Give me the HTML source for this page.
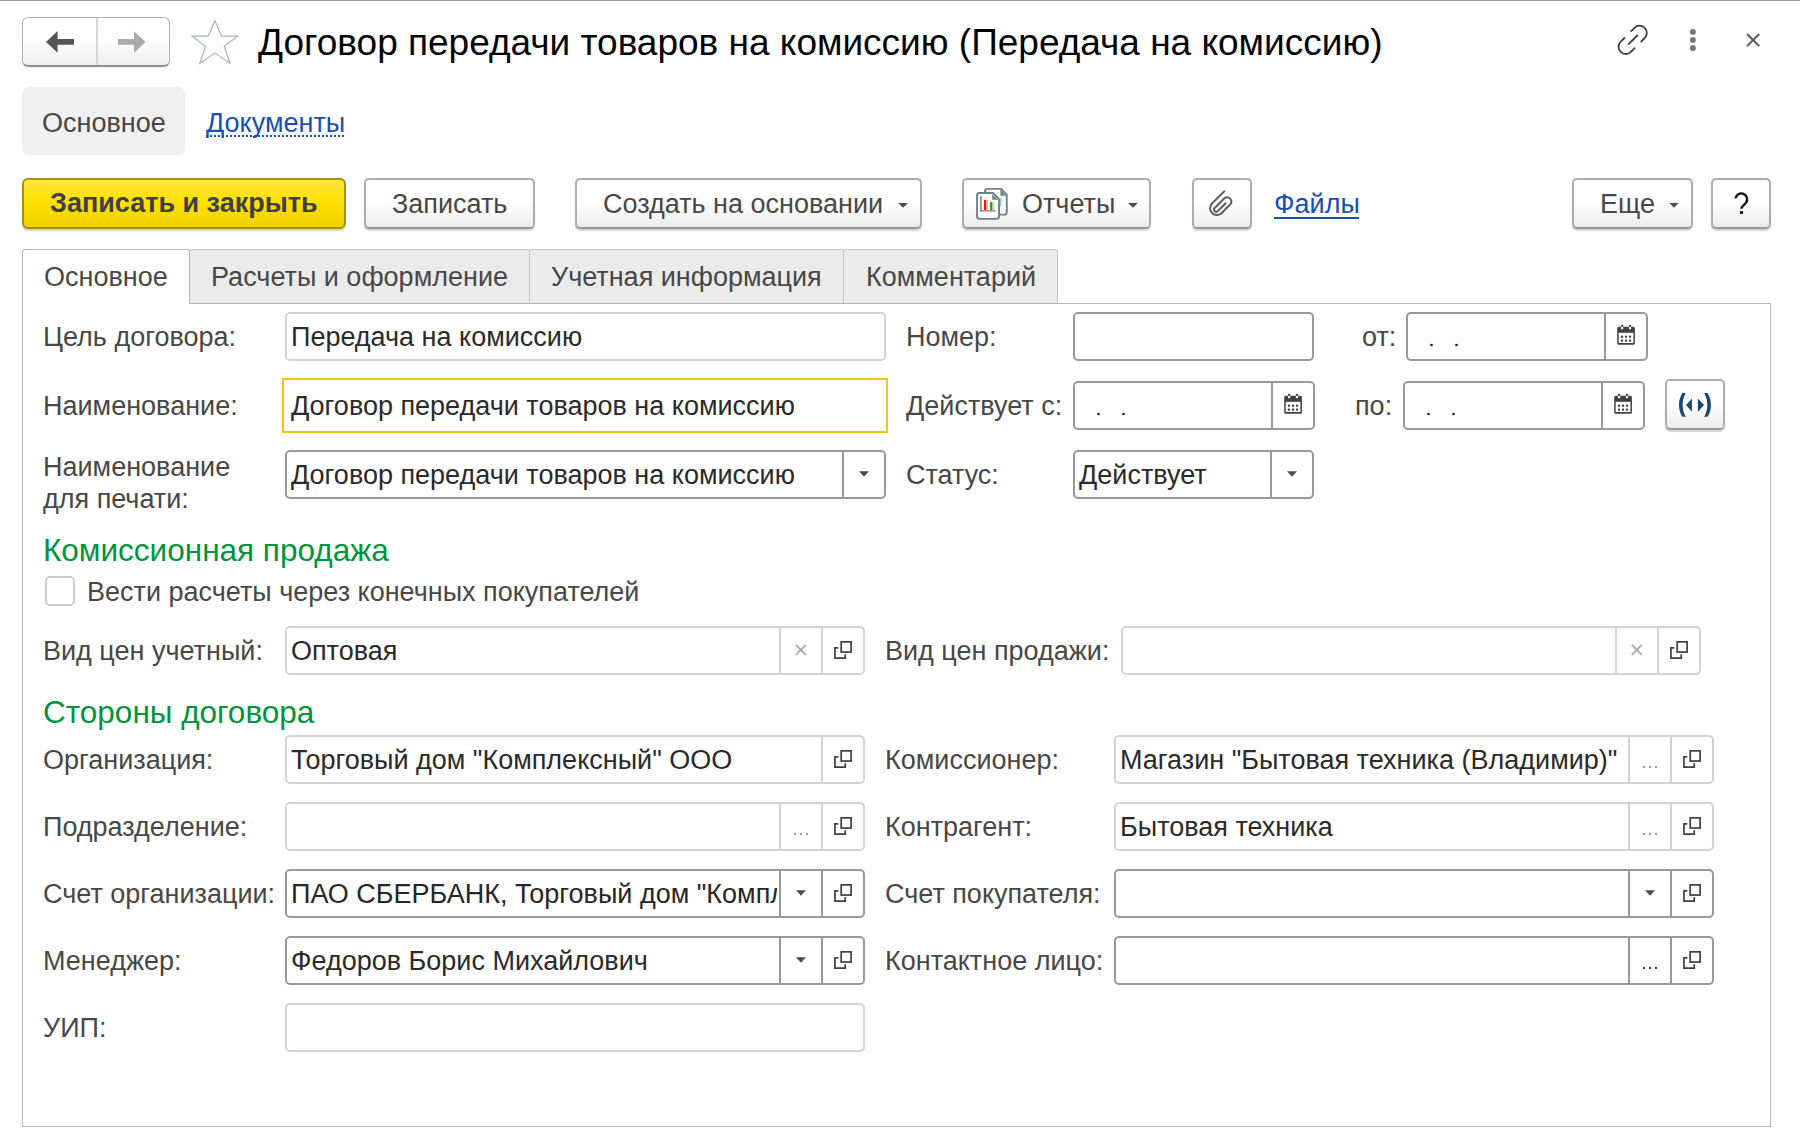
<!DOCTYPE html><html><head><meta charset="utf-8"><style>
html,body{margin:0;padding:0}
body{width:1800px;height:1146px;overflow:hidden;background:#fff;position:relative;font-family:"Liberation Sans",sans-serif}
.a{position:absolute;box-sizing:border-box}
.t{white-space:nowrap;line-height:40px;font-family:"Liberation Sans",sans-serif}
.inp{border:2px solid #999;border-radius:5px;background:#fff}
.btn{border:2px solid #adadad;border-bottom-color:#989898;border-radius:5px;background:linear-gradient(#fff 0%,#fff 45%,#ededed 100%);box-shadow:0 1.5px 1px #d6d6d6}
</style></head><body>
<div class="a" style="left:0px;top:0px;width:1800px;height:1px;background:#a0a0a0"></div>
<div class="a" style="left:22px;top:17px;width:148px;height:50px;border:1px solid #b0b0b0;border-bottom:2px solid #929292;border-radius:6px;background:linear-gradient(#fff 0%,#fff 40%,#efefef 100%);box-shadow:0 1px 1px rgba(0,0,0,0.06)"></div>
<div class="a" style="left:96px;top:18px;width:2px;height:47px;background:#d8d8d8"></div>
<div class="a t" style="left:258px;top:23px;font-size:37px;color:#000;font-weight:normal;">Договор передачи товаров на комиссию (Передача на комиссию)</div>
<div class="a" style="left:22px;top:87px;width:163px;height:68px;background:#f0f0f0;border-radius:7px"></div>
<div class="a t" style="left:42px;top:103px;font-size:27px;color:#474747;font-weight:normal;">Основное</div>
<div class="a t" style="left:206px;top:103px;font-size:27px;color:#1550b5;font-weight:normal;">Документы</div>
<div class="a" style="left:206px;top:135px;width:140px;height:2px;background-image:linear-gradient(90deg,#1550b5 50%,transparent 50%);background-size:4px 2px"></div>
<div class="a" style="left:22px;top:178px;width:324px;height:51px;border:2px solid #a5910a;border-radius:6px;background:linear-gradient(#ffe640,#fee100 45%,#f0d200);box-shadow:0 1.5px 1px #cfd2d6"></div>
<div class="a t" style="left:50px;top:183px;font-size:27px;color:#3f3f46;font-weight:bold;">Записать и закрыть</div>
<div class="a btn" style="left:364px;top:178px;width:171px;height:51px"></div>
<div class="a t" style="left:392px;top:184px;font-size:27px;color:#474747;font-weight:normal;">Записать</div>
<div class="a btn" style="left:575px;top:178px;width:347px;height:51px"></div>
<div class="a t" style="left:603px;top:184px;font-size:27px;color:#474747;font-weight:normal;">Создать на основании</div>
<div class="a btn" style="left:962px;top:178px;width:189px;height:51px"></div>
<div class="a t" style="left:1022px;top:184px;font-size:27px;color:#474747;font-weight:normal;">Отчеты</div>
<div class="a btn" style="left:1192px;top:178px;width:60px;height:51px"></div>
<div class="a t" style="left:1274px;top:184px;font-size:27px;color:#1550b5;font-weight:normal;">Файлы</div>
<div class="a" style="left:1274px;top:217px;width:85px;height:2px;background:#1550b5"></div>
<div class="a btn" style="left:1572px;top:178px;width:121px;height:51px"></div>
<div class="a t" style="left:1600px;top:184px;font-size:27px;color:#474747;font-weight:normal;">Еще</div>
<div class="a btn" style="left:1711px;top:178px;width:60px;height:51px"></div>
<div class="a" style="left:189px;top:249px;width:341px;height:55px;background:#ebebeb;border:1px solid #c4c4c4;border-bottom:none;border-radius:3px 3px 0 0"></div>
<div class="a" style="left:529px;top:249px;width:315px;height:55px;background:#ebebeb;border:1px solid #c4c4c4;border-bottom:none;border-radius:3px 3px 0 0"></div>
<div class="a" style="left:843px;top:249px;width:215px;height:55px;background:#ebebeb;border:1px solid #c4c4c4;border-bottom:none;border-radius:3px 3px 0 0"></div>
<div class="a" style="left:22px;top:303px;width:1749px;height:824px;border:1px solid #b5b5b5"></div>
<div class="a" style="left:22px;top:249px;width:168px;height:55px;background:#fff;border:1px solid #b5b5b5;border-bottom:none;border-radius:3px 3px 0 0"></div>
<div class="a t" style="left:44px;top:257px;font-size:27px;color:#474747;font-weight:normal;">Основное</div>
<div class="a t" style="left:211px;top:257px;font-size:27px;color:#474747;font-weight:normal;">Расчеты и оформление</div>
<div class="a t" style="left:551px;top:257px;font-size:27px;color:#474747;font-weight:normal;">Учетная информация</div>
<div class="a t" style="left:866px;top:257px;font-size:27px;color:#474747;font-weight:normal;">Комментарий</div>
<div class="a t" style="left:43px;top:317px;font-size:27px;color:#474747;font-weight:normal;">Цель договора:</div>
<div class="a inp" style="left:285px;top:312px;width:601px;height:49px;border-color:#d3d3d3"></div>
<div class="a t" style="left:291px;top:317px;font-size:27px;color:#2a2a2a;font-weight:normal;">Передача на комиссию</div>
<div class="a t" style="left:906px;top:317px;font-size:27px;color:#474747;font-weight:normal;">Номер:</div>
<div class="a inp" style="left:1073px;top:312px;width:241px;height:49px;border-color:#999999"></div>
<div class="a t" style="left:1362px;top:317px;font-size:27px;color:#474747;font-weight:normal;">от:</div>
<div class="a inp" style="left:1406px;top:312px;width:242px;height:49px;border-color:#999999"></div>
<div class="a" style="left:1604px;top:313px;width:2px;height:47px;background:#999999"></div>
<div class="a t" style="left:43px;top:386px;font-size:27px;color:#474747;font-weight:normal;">Наименование:</div>
<div class="a" style="left:282px;top:378px;width:606px;height:55px;border:2px solid #f8c315"></div>
<div class="a t" style="left:291px;top:386px;font-size:27px;color:#2a2a2a;font-weight:normal;">Договор передачи товаров на комиссию</div>
<div class="a t" style="left:906px;top:386px;font-size:27px;color:#474747;font-weight:normal;">Действует с:</div>
<div class="a inp" style="left:1073px;top:381px;width:242px;height:49px;border-color:#999999"></div>
<div class="a" style="left:1271px;top:382px;width:2px;height:47px;background:#999999"></div>
<div class="a t" style="left:1355px;top:386px;font-size:27px;color:#474747;font-weight:normal;">по:</div>
<div class="a inp" style="left:1403px;top:381px;width:242px;height:49px;border-color:#999999"></div>
<div class="a" style="left:1601px;top:382px;width:2px;height:47px;background:#999999"></div>
<div class="a btn" style="left:1665px;top:379px;width:60px;height:51px"></div>
<div class="a t" style="left:43px;top:447px;font-size:27px;color:#474747;font-weight:normal;">Наименование</div>
<div class="a t" style="left:43px;top:479px;font-size:27px;color:#474747;font-weight:normal;">для печати:</div>
<div class="a inp" style="left:285px;top:450px;width:601px;height:49px;border-color:#999999"></div>
<div class="a" style="left:842px;top:451px;width:2px;height:47px;background:#999999"></div>
<div class="a t" style="left:291px;top:455px;font-size:27px;color:#2a2a2a;font-weight:normal;">Договор передачи товаров на комиссию</div>
<div class="a t" style="left:906px;top:455px;font-size:27px;color:#474747;font-weight:normal;">Статус:</div>
<div class="a inp" style="left:1073px;top:450px;width:241px;height:49px;border-color:#999999"></div>
<div class="a" style="left:1270px;top:451px;width:2px;height:47px;background:#999999"></div>
<div class="a t" style="left:1079px;top:455px;font-size:27px;color:#2a2a2a;font-weight:normal;">Действует</div>
<div class="a t" style="left:43px;top:530px;font-size:31.5px;color:#00943c;font-weight:normal;">Комиссионная продажа</div>
<div class="a" style="left:45px;top:576px;width:30px;height:30px;border:2px solid #cccccc;border-radius:5px;background:#fff"></div>
<div class="a t" style="left:87px;top:572px;font-size:27px;color:#474747;font-weight:normal;">Вести расчеты через конечных покупателей</div>
<div class="a t" style="left:43px;top:631px;font-size:27px;color:#474747;font-weight:normal;">Вид цен учетный:</div>
<div class="a inp" style="left:285px;top:626px;width:580px;height:49px;border-color:#d3d3d3"></div>
<div class="a" style="left:821px;top:627px;width:2px;height:47px;background:#d3d3d3"></div>
<div class="a" style="left:779px;top:627px;width:2px;height:47px;background:#d3d3d3"></div>
<div class="a t" style="left:291px;top:631px;font-size:27px;color:#2a2a2a;font-weight:normal;">Оптовая</div>
<div class="a t" style="left:885px;top:631px;font-size:27px;color:#474747;font-weight:normal;">Вид цен продажи:</div>
<div class="a inp" style="left:1121px;top:626px;width:580px;height:49px;border-color:#d3d3d3"></div>
<div class="a" style="left:1657px;top:627px;width:2px;height:47px;background:#d3d3d3"></div>
<div class="a" style="left:1615px;top:627px;width:2px;height:47px;background:#d3d3d3"></div>
<div class="a t" style="left:43px;top:692px;font-size:31.5px;color:#00943c;font-weight:normal;">Стороны договора</div>
<div class="a t" style="left:43px;top:740px;font-size:27px;color:#474747;font-weight:normal;">Организация:</div>
<div class="a inp" style="left:285px;top:735px;width:580px;height:49px;border-color:#d3d3d3"></div>
<div class="a" style="left:821px;top:736px;width:2px;height:47px;background:#d3d3d3"></div>
<div class="a t" style="left:291px;top:740px;font-size:27px;color:#2a2a2a;font-weight:normal;">Торговый дом "Комплексный" ООО</div>
<div class="a t" style="left:885px;top:740px;font-size:27px;color:#474747;font-weight:normal;">Комиссионер:</div>
<div class="a inp" style="left:1114px;top:735px;width:600px;height:49px;border-color:#d3d3d3"></div>
<div class="a" style="left:1670px;top:736px;width:2px;height:47px;background:#d3d3d3"></div>
<div class="a" style="left:1628px;top:736px;width:2px;height:47px;background:#d3d3d3"></div>
<div class="a t" style="left:1120px;top:740px;font-size:27px;color:#2a2a2a;font-weight:normal;">Магазин "Бытовая техника (Владимир)"</div>
<div class="a t" style="left:43px;top:807px;font-size:27px;color:#474747;font-weight:normal;">Подразделение:</div>
<div class="a inp" style="left:285px;top:802px;width:580px;height:49px;border-color:#d3d3d3"></div>
<div class="a" style="left:821px;top:803px;width:2px;height:47px;background:#d3d3d3"></div>
<div class="a" style="left:779px;top:803px;width:2px;height:47px;background:#d3d3d3"></div>
<div class="a t" style="left:885px;top:807px;font-size:27px;color:#474747;font-weight:normal;">Контрагент:</div>
<div class="a inp" style="left:1114px;top:802px;width:600px;height:49px;border-color:#d3d3d3"></div>
<div class="a" style="left:1670px;top:803px;width:2px;height:47px;background:#d3d3d3"></div>
<div class="a" style="left:1628px;top:803px;width:2px;height:47px;background:#d3d3d3"></div>
<div class="a t" style="left:1120px;top:807px;font-size:27px;color:#2a2a2a;font-weight:normal;">Бытовая техника</div>
<div class="a t" style="left:43px;top:874px;font-size:27px;color:#474747;font-weight:normal;">Счет организации:</div>
<div class="a inp" style="left:285px;top:869px;width:580px;height:49px;border-color:#999999"></div>
<div class="a" style="left:821px;top:870px;width:2px;height:47px;background:#999999"></div>
<div class="a" style="left:779px;top:870px;width:2px;height:47px;background:#999999"></div>
<div class="a t" style="left:885px;top:874px;font-size:27px;color:#474747;font-weight:normal;">Счет покупателя:</div>
<div class="a inp" style="left:1114px;top:869px;width:600px;height:49px;border-color:#999999"></div>
<div class="a" style="left:1670px;top:870px;width:2px;height:47px;background:#999999"></div>
<div class="a" style="left:1628px;top:870px;width:2px;height:47px;background:#999999"></div>
<div class="a t" style="left:43px;top:941px;font-size:27px;color:#474747;font-weight:normal;">Менеджер:</div>
<div class="a inp" style="left:285px;top:936px;width:580px;height:49px;border-color:#999999"></div>
<div class="a" style="left:821px;top:937px;width:2px;height:47px;background:#999999"></div>
<div class="a" style="left:779px;top:937px;width:2px;height:47px;background:#999999"></div>
<div class="a t" style="left:291px;top:941px;font-size:27px;color:#2a2a2a;font-weight:normal;">Федоров Борис Михайлович</div>
<div class="a t" style="left:885px;top:941px;font-size:27px;color:#474747;font-weight:normal;">Контактное лицо:</div>
<div class="a inp" style="left:1114px;top:936px;width:600px;height:49px;border-color:#999999"></div>
<div class="a" style="left:1670px;top:937px;width:2px;height:47px;background:#999999"></div>
<div class="a" style="left:1628px;top:937px;width:2px;height:47px;background:#999999"></div>
<div class="a" style="left:287px;top:871px;width:490px;height:45px;overflow:hidden"><div class="a t" style="left:4px;top:3px;font-size:27px;color:#262626">ПАО СБЕРБАНК, Торговый дом "Комплексный" ООО</div></div>
<div class="a t" style="left:43px;top:1008px;font-size:27px;color:#474747;font-weight:normal;">УИП:</div>
<div class="a inp" style="left:285px;top:1003px;width:580px;height:49px;border-color:#d3d3d3"></div>
<svg class="a" style="left:0;top:0" width="1800" height="1146"><path d="M46 42 L57.6 31 V39 H74 V44.7 H57.6 V52.7 Z" fill="#555"/><path d="M145.6 42 L134 31.3 V38.9 H118 V44.7 H134 V52.7 Z" fill="#aaa"/><path d="M214.9 20.7 L221.6 36.2 L237.6 36.2 L224.2 46.4 L230 63.3 L214.9 53.1 L199.8 63.3 L205.6 46.4 L192.2 36.2 L208.2 36.2 Z" fill="none" stroke="#a9b2bc" stroke-width="1.2"/><g fill="none" stroke="#404040" stroke-width="1.8" stroke-linecap="round"><path d="M1631.2 31.1 L1634.5 27.8 A7.2 7.2 0 0 1 1644.7 38.0 L1641.2 41.5"/><path d="M1624.4 38.0 L1620.7 41.7 A7.2 7.2 0 0 0 1630.9 51.9 L1634.6 48.2"/><path d="M1628.6 44.2 L1637.3 35.5"/></g><circle cx="1692.9" cy="31.9" r="2.95" fill="#777"/><circle cx="1692.9" cy="40.0" r="2.95" fill="#777"/><circle cx="1692.9" cy="48.0" r="2.95" fill="#777"/><path d="M1747 34 L1759.2 46.2 M1759.2 34 L1747 46.2" stroke="#555" stroke-width="1.9"/><path d="M898.10 202.95 H907.90 L903.00 207.85 Z" fill="#4d4d4d"/><g stroke="#6e7f8c" stroke-width="1.9" stroke-linejoin="round"><path d="M985 214.65 V191.4 Q985 188.9 987.5 188.9 H1001 L1006.75 194.7 V212.15 Q1006.75 214.65 1004.25 214.65 Z" fill="#fff"/><path d="M977.05 195.55 Q977.05 193.05 979.55 193.05 H993 L999.05 199 V216.35 Q999.05 218.85 996.55 218.85 H979.55 Q977.05 218.85 977.05 216.35 Z" fill="#fff"/></g><path d="M1000.4 189.6 V195.7 H1006.2 Z" fill="#6e7f8c"/><path d="M992.2 194.2 V199.7 H998.1 Z" fill="#6e7f8c"/><rect x="980.1" y="196.1" width="1.7" height="15.4" fill="#8a8a8a"/><rect x="980.1" y="210.2" width="15.7" height="1.4" fill="#8a8a8a"/><rect x="984" y="199.9" width="2" height="10.3" fill="#e8200a"/><rect x="986" y="199.9" width="1.8" height="10.3" fill="#f4a595"/><rect x="990.1" y="202" width="2" height="8.2" fill="#2e9a12"/><rect x="992.1" y="202" width="1.8" height="8.2" fill="#a9d99a"/><rect x="999.9" y="198" width="1.8" height="8" fill="#a9d99a"/><path d="M1128.10 202.95 H1137.90 L1133.00 207.85 Z" fill="#4d4d4d"/><path transform="translate(1224.3 191.3) scale(1.12) translate(-1224.3 -191.3)" d="M1224.3 191.3 L1213.2 202.3 A6.05 6.05 0 0 0 1221.75 210.85 L1229.7 202.9 A3.8 3.8 0 0 0 1224.35 197.55 L1215.7 206.2 A1.98 1.98 0 0 0 1218.5 209.0 L1225.5 202" fill="none" stroke="#5a5a5a" stroke-width="1.7" stroke-linecap="round"/><path d="M1669.40 202.95 H1678.60 L1674.00 207.85 Z" fill="#4d4d4d"/><path d="M1735.4 198.4 A5.9 5.9 0 1 1 1746.0 202.8 L1743.4 205.3 Q1741.4 207.2 1741.4 208.8" fill="none" stroke="#111" stroke-width="2.4"/><rect x="1739.9" y="211.1" width="3.2" height="2.8" fill="#111"/><rect x="1617.20" y="326.80" width="17.7" height="18" rx="1.6" fill="#404040"/><rect x="1618.70" y="332.80" width="14.7" height="10.2" fill="#fff"/><rect x="1621.00" y="324.90" width="2.2" height="2" fill="#404040"/><rect x="1621.00" y="326.90" width="2.2" height="2.3" fill="#fff"/><rect x="1628.90" y="324.90" width="2.2" height="2" fill="#404040"/><rect x="1628.90" y="326.90" width="2.2" height="2.3" fill="#fff"/><rect x="1621.00" y="335.65" width="2.1" height="2.1" fill="#404040"/><rect x="1621.00" y="339.60" width="2.1" height="2.1" fill="#404040"/><rect x="1625.00" y="335.65" width="2.1" height="2.1" fill="#404040"/><rect x="1625.00" y="339.60" width="2.1" height="2.1" fill="#404040"/><rect x="1629.00" y="335.65" width="2.1" height="2.1" fill="#404040"/><rect x="1629.00" y="339.60" width="2.1" height="2.1" fill="#404040"/><rect x="1430.30" y="343.90" width="2.4" height="2.2" fill="#222"/><rect x="1455.30" y="343.90" width="2.4" height="2.2" fill="#222"/><rect x="1284.20" y="395.80" width="17.7" height="18" rx="1.6" fill="#404040"/><rect x="1285.70" y="401.80" width="14.7" height="10.2" fill="#fff"/><rect x="1288.00" y="393.90" width="2.2" height="2" fill="#404040"/><rect x="1288.00" y="395.90" width="2.2" height="2.3" fill="#fff"/><rect x="1295.90" y="393.90" width="2.2" height="2" fill="#404040"/><rect x="1295.90" y="395.90" width="2.2" height="2.3" fill="#fff"/><rect x="1288.00" y="404.65" width="2.1" height="2.1" fill="#404040"/><rect x="1288.00" y="408.60" width="2.1" height="2.1" fill="#404040"/><rect x="1292.00" y="404.65" width="2.1" height="2.1" fill="#404040"/><rect x="1292.00" y="408.60" width="2.1" height="2.1" fill="#404040"/><rect x="1296.00" y="404.65" width="2.1" height="2.1" fill="#404040"/><rect x="1296.00" y="408.60" width="2.1" height="2.1" fill="#404040"/><rect x="1097.30" y="412.90" width="2.4" height="2.2" fill="#222"/><rect x="1122.30" y="412.90" width="2.4" height="2.2" fill="#222"/><rect x="1614.20" y="395.80" width="17.7" height="18" rx="1.6" fill="#404040"/><rect x="1615.70" y="401.80" width="14.7" height="10.2" fill="#fff"/><rect x="1618.00" y="393.90" width="2.2" height="2" fill="#404040"/><rect x="1618.00" y="395.90" width="2.2" height="2.3" fill="#fff"/><rect x="1625.90" y="393.90" width="2.2" height="2" fill="#404040"/><rect x="1625.90" y="395.90" width="2.2" height="2.3" fill="#fff"/><rect x="1618.00" y="404.65" width="2.1" height="2.1" fill="#404040"/><rect x="1618.00" y="408.60" width="2.1" height="2.1" fill="#404040"/><rect x="1622.00" y="404.65" width="2.1" height="2.1" fill="#404040"/><rect x="1622.00" y="408.60" width="2.1" height="2.1" fill="#404040"/><rect x="1626.00" y="404.65" width="2.1" height="2.1" fill="#404040"/><rect x="1626.00" y="408.60" width="2.1" height="2.1" fill="#404040"/><rect x="1427.30" y="412.90" width="2.4" height="2.2" fill="#222"/><rect x="1452.30" y="412.90" width="2.4" height="2.2" fill="#222"/><g fill="#124872"><path d="M1682.4 393.1 H1685.7 C1683.2 398 1682.6 401.5 1682.6 405 C1682.6 408.5 1683.2 412 1685.7 416.8 H1682.4 C1679.8 412.5 1679 409 1679 405 C1679 401 1679.8 397.5 1682.4 393.1 Z"/><path d="M1707.5 393.1 H1704.2 C1706.7 398 1707.3 401.5 1707.3 405 C1707.3 408.5 1706.7 412 1704.2 416.8 H1707.5 C1710.1 412.5 1710.9 409 1710.9 405 C1710.9 401 1710.1 397.5 1707.5 393.1 Z"/><path d="M1686.1 405 L1691.9 398.4 V411.8 Z"/><path d="M1704 405 L1697.9 398.4 V411.8 Z"/></g><path d="M859.00 471.15 H869.00 L864.00 476.65 Z" fill="#4d4d4d"/><path d="M1287.00 471.15 H1297.00 L1292.00 476.65 Z" fill="#4d4d4d"/><g fill="none" stroke="#404040" stroke-width="1.7" stroke-linecap="butt"><rect x="841.20" y="641.85" width="9.90" height="10.20"/><path d="M838.30 647.95 H834.95 V658.15 H845.25 V654.30"/></g><path d="M795.80 644.80 L805.80 654.80 M805.80 644.80 L795.80 654.80" stroke="#aaaaaa" stroke-width="1.8"/><g fill="none" stroke="#404040" stroke-width="1.7" stroke-linecap="butt"><rect x="1677.20" y="641.85" width="9.90" height="10.20"/><path d="M1674.30 647.95 H1670.95 V658.15 H1681.25 V654.30"/></g><path d="M1631.80 644.80 L1641.80 654.80 M1641.80 644.80 L1631.80 654.80" stroke="#aaaaaa" stroke-width="1.8"/><g fill="none" stroke="#404040" stroke-width="1.7" stroke-linecap="butt"><rect x="841.20" y="750.85" width="9.90" height="10.20"/><path d="M838.30 756.95 H834.95 V767.15 H845.25 V763.30"/></g><g fill="none" stroke="#404040" stroke-width="1.7" stroke-linecap="butt"><rect x="1690.20" y="750.85" width="9.90" height="10.20"/><path d="M1687.30 756.95 H1683.95 V767.15 H1694.25 V763.30"/></g><rect x="1643.00" y="765.90" width="2" height="2.1" fill="#9a9a9a"/><rect x="1649.00" y="765.90" width="2" height="2.1" fill="#9a9a9a"/><rect x="1655.00" y="765.90" width="2" height="2.1" fill="#9a9a9a"/><g fill="none" stroke="#404040" stroke-width="1.7" stroke-linecap="butt"><rect x="841.20" y="817.85" width="9.90" height="10.20"/><path d="M838.30 823.95 H834.95 V834.15 H845.25 V830.30"/></g><rect x="794.00" y="832.90" width="2" height="2.1" fill="#9a9a9a"/><rect x="800.00" y="832.90" width="2" height="2.1" fill="#9a9a9a"/><rect x="806.00" y="832.90" width="2" height="2.1" fill="#9a9a9a"/><g fill="none" stroke="#404040" stroke-width="1.7" stroke-linecap="butt"><rect x="1690.20" y="817.85" width="9.90" height="10.20"/><path d="M1687.30 823.95 H1683.95 V834.15 H1694.25 V830.30"/></g><rect x="1643.00" y="832.90" width="2" height="2.1" fill="#9a9a9a"/><rect x="1649.00" y="832.90" width="2" height="2.1" fill="#9a9a9a"/><rect x="1655.00" y="832.90" width="2" height="2.1" fill="#9a9a9a"/><g fill="none" stroke="#404040" stroke-width="1.7" stroke-linecap="butt"><rect x="841.20" y="884.85" width="9.90" height="10.20"/><path d="M838.30 890.95 H834.95 V901.15 H845.25 V897.30"/></g><path d="M796.00 890.15 H806.00 L801.00 895.65 Z" fill="#4d4d4d"/><g fill="none" stroke="#404040" stroke-width="1.7" stroke-linecap="butt"><rect x="1690.20" y="884.85" width="9.90" height="10.20"/><path d="M1687.30 890.95 H1683.95 V901.15 H1694.25 V897.30"/></g><path d="M1645.00 890.15 H1655.00 L1650.00 895.65 Z" fill="#4d4d4d"/><g fill="none" stroke="#404040" stroke-width="1.7" stroke-linecap="butt"><rect x="841.20" y="951.85" width="9.90" height="10.20"/><path d="M838.30 957.95 H834.95 V968.15 H845.25 V964.30"/></g><path d="M796.00 957.15 H806.00 L801.00 962.65 Z" fill="#4d4d4d"/><g fill="none" stroke="#404040" stroke-width="1.7" stroke-linecap="butt"><rect x="1690.20" y="951.85" width="9.90" height="10.20"/><path d="M1687.30 957.95 H1683.95 V968.15 H1694.25 V964.30"/></g><rect x="1643.00" y="966.90" width="2" height="2.1" fill="#404040"/><rect x="1649.00" y="966.90" width="2" height="2.1" fill="#404040"/><rect x="1655.00" y="966.90" width="2" height="2.1" fill="#404040"/></svg>
</body></html>
